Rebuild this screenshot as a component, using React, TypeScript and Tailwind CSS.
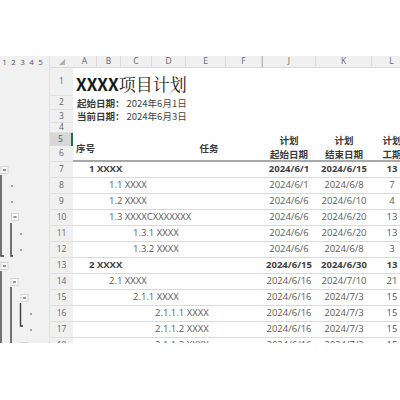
const cjk = "font-['Noto_Sans_CJK_SC',sans-serif]";
const lat = "font-['Open_Sans','Noto_Sans_CJK_SC',sans-serif]";

type Row = { n: number; t: string; lvl: number; s: string; e: string; d: string; bold?: boolean };

const rows: Row[] = [
  { n: 7, t: "1 XXXX", lvl: 0, s: "2024/6/1", e: "2024/6/15", d: "13", bold: true },
  { n: 8, t: "1.1 XXXX", lvl: 1, s: "2024/6/1", e: "2024/6/8", d: "7" },
  { n: 9, t: "1.2 XXXX", lvl: 1, s: "2024/6/6", e: "2024/6/10", d: "4" },
  { n: 10, t: "1.3 XXXXCXXXXXXX", lvl: 1, s: "2024/6/6", e: "2024/6/20", d: "13" },
  { n: 11, t: "1.3.1 XXXX", lvl: 2, s: "2024/6/6", e: "2024/6/20", d: "13" },
  { n: 12, t: "1.3.2 XXXX", lvl: 2, s: "2024/6/6", e: "2024/6/8", d: "3" },
  { n: 13, t: "2 XXXX", lvl: 0, s: "2024/6/15", e: "2024/6/30", d: "13", bold: true },
  { n: 14, t: "2.1 XXXX", lvl: 1, s: "2024/6/16", e: "2024/7/10", d: "21" },
  { n: 15, t: "2.1.1 XXXX", lvl: 2, s: "2024/6/16", e: "2024/7/3", d: "15" },
  { n: 16, t: "2.1.1.1 XXXX", lvl: 3, s: "2024/6/16", e: "2024/7/3", d: "15" },
  { n: 17, t: "2.1.1.2 XXXX", lvl: 3, s: "2024/6/16", e: "2024/7/3", d: "15" },
  { n: 18, t: "2.1.1.3 XXXX", lvl: 3, s: "2024/6/16", e: "2024/7/3", d: "15" },
];

const indent = ["pl-[16px]", "pl-[36px]", "pl-[60px]", "pl-[82px]"];

const cols = [
  { l: "A", w: "w-[24px]" },
  { l: "B", w: "w-[24px]" },
  { l: "C", w: "w-[31px]" },
  { l: "D", w: "w-[34px]" },
  { l: "E", w: "w-[40px]" },
  { l: "F", w: "w-[36px]" },
  { l: "J", w: "w-[54px]" },
  { l: "K", w: "w-[56px]" },
  { l: "L", w: "w-[40px]" },
];

function Btn({ x, y }: { x: number; y: number }) {
  return (
    <g>
      <rect x={x - 3.5} y={y - 3.5} width={7} height={7} fill="#fafafa" stroke="#cfcfcf" strokeWidth={0.8} />
      <line x1={x - 1.5} y1={y} x2={x + 1.5} y2={y} stroke="#333" strokeWidth={1} />
    </g>
  );
}

function Dot({ x, y }: { x: number; y: number }) {
  return <rect x={x - 0.7} y={y - 0.7} width={1.4} height={1.4} fill="#555" />;
}

function Outline() {
  const ln = { stroke: "#3c3c3c", strokeWidth: 1.4, fill: "none" };
  return (
    <svg width="50" height="275" viewBox="0 68 50 275">
      <Btn x={4.5} y={170} />
      <path d="M1 175 V256 H4" {...ln} />
      <Dot x={12} y={186} />
      <Dot x={12} y={202} />
      <Btn x={15} y={217} />
      <path d="M11 223 V256 H13" {...ln} />
      <Dot x={21} y={234} />
      <Dot x={21} y={250} />
      <Btn x={4.5} y={266} />
      <path d="M1 271 V345" {...ln} />
      <Btn x={14.5} y={282} />
      <path d="M11 287 V345" {...ln} />
      <Btn x={24.5} y={298} />
      <path d="M20.5 303 V326 H23" {...ln} />
      <Dot x={31} y={314} />
      <Dot x={31} y={330} />
      <Btn x={24.5} y={346} />
    </svg>
  );
}

const rowHeads: { n: number; h: string }[] = [
  { n: 1, h: "h-[28px]" },
  { n: 2, h: "h-[14px]" },
  { n: 3, h: "h-[13px]" },
  { n: 4, h: "h-[10px]" },
  { n: 5, h: "h-[13px]" },
  { n: 6, h: "h-[16px]" },
];

export default function App() {
  return (
    <div className="w-[400px] h-[400px] bg-white pt-[56px] overflow-hidden">
      <div className="flex h-[287px] overflow-hidden">
        {/* outline pane */}
        <div className="w-[50px] shrink-0 bg-[#f1f1f1] border-r border-[#e2e2e2] flex flex-col">
          <div className={`h-[12px] shrink-0 flex items-center text-[8px] text-[#555] ${lat}`}>
            {[1, 2, 3, 4, 5].map((n) => (
              <span key={n} className="w-[9px] text-center">{n}</span>
            ))}
          </div>
          <Outline />
        </div>

        {/* row headers */}
        <div className={`w-[23px] shrink-0 bg-[#f0f0f0] flex flex-col text-[8.5px] text-[#666] ${lat}`}>
          <div className="h-[12px] shrink-0 flex items-end justify-center pb-[2px] border-b border-[#dadada]">
            <svg width="6" height="6" viewBox="0 0 6 6">
              <path d="M6 0 V6 H0 Z" fill="#b0b0b0" />
            </svg>
          </div>
          {rowHeads.map((r) =>
            r.n === 5 ? (
              <div key={r.n} className={`${r.h} shrink-0 flex items-center justify-center bg-[#d8d8d8] text-[#217346] border-r-2 border-[#217346]`}>
                {r.n}
              </div>
            ) : (
              <div key={r.n} className={`${r.h} shrink-0 flex items-center justify-center border-b border-[#e0e0e0]`}>
                {r.n}
              </div>
            )
          )}
          {rows.map((r) => (
            <div key={r.n} className="h-[16px] shrink-0 flex items-center justify-center border-b border-[#e0e0e0]">
              {r.n}
            </div>
          ))}
        </div>

        {/* sheet */}
        <div className="flex-1 min-w-0 flex flex-col">
          <div className={`h-[12px] shrink-0 flex bg-[#f0f0f0] border-b border-[#dadada] text-[8.5px] text-[#666] ${lat}`}>
            {cols.map((c) => (
              <div key={c.l} className={`${c.w} shrink-0 flex items-center justify-center border-r border-[#dcdcdc] ${c.l === "J" ? "border-l border-l-[#b8b8b8]" : ""}`}>
                {c.l}
              </div>
            ))}
          </div>

          <div className="h-[28px] shrink-0 flex items-center pl-[3px] pt-[2px] text-[17px] leading-none text-[#1a1a1a] whitespace-nowrap">
            <span className={`${cjk} font-bold`}>XXXX</span>
            <span className="font-['Noto_Serif_CJK_SC','Noto_Sans_CJK_SC',serif]">项目计划</span>
          </div>
          <div className={`h-[14px] shrink-0 flex items-center pl-[4px] text-[9.5px] whitespace-nowrap ${cjk}`}>
            <span className="font-bold text-[#3a3a3a] mr-[2px]">起始日期：</span>
            <span className="text-[#444]">2024年6月1日</span>
          </div>
          <div className={`h-[13px] shrink-0 flex items-center pl-[4px] text-[9.5px] whitespace-nowrap ${cjk}`}>
            <span className="font-bold text-[#3a3a3a] mr-[2px]">当前日期：</span>
            <span className="text-[#444]">2024年6月3日</span>
          </div>
          <div className="h-[10px] shrink-0" />

          <div className={`h-[29px] shrink-0 flex items-center border-b-2 border-[#a8a8a8] text-[9.5px] font-bold text-[#3a3a3a] leading-[14px] whitespace-nowrap ${cjk}`}>
            <div className="w-[83px] shrink-0 pl-[3px] pt-[2px]">序号</div>
            <div className="w-[106px] shrink-0 pt-[2px] text-center">任务</div>
            <div className="w-[54px] shrink-0 text-center">计划<br />起始日期</div>
            <div className="w-[56px] shrink-0 text-center">计划<br />结束日期</div>
            <div className="w-[40px] shrink-0 text-center">计划<br />工期</div>
          </div>

          {rows.map((r) => (
            <div
              key={r.n}
              className={`h-[16px] shrink-0 flex items-center border-b border-[#d9d9d9] text-[9.5px] whitespace-nowrap ${lat} ${r.bold ? "font-bold text-[#3f3f3f]" : "text-[#5a5a5a]"}`}
            >
              <div className={`w-[189px] shrink-0 ${indent[r.lvl]}`}>{r.t}</div>
              <div className="w-[54px] shrink-0 text-center">{r.s}</div>
              <div className="w-[56px] shrink-0 text-center">{r.e}</div>
              <div className="w-[40px] shrink-0 text-center">{r.d}</div>
            </div>
          ))}
        </div>
      </div>
    </div>
  );
}
